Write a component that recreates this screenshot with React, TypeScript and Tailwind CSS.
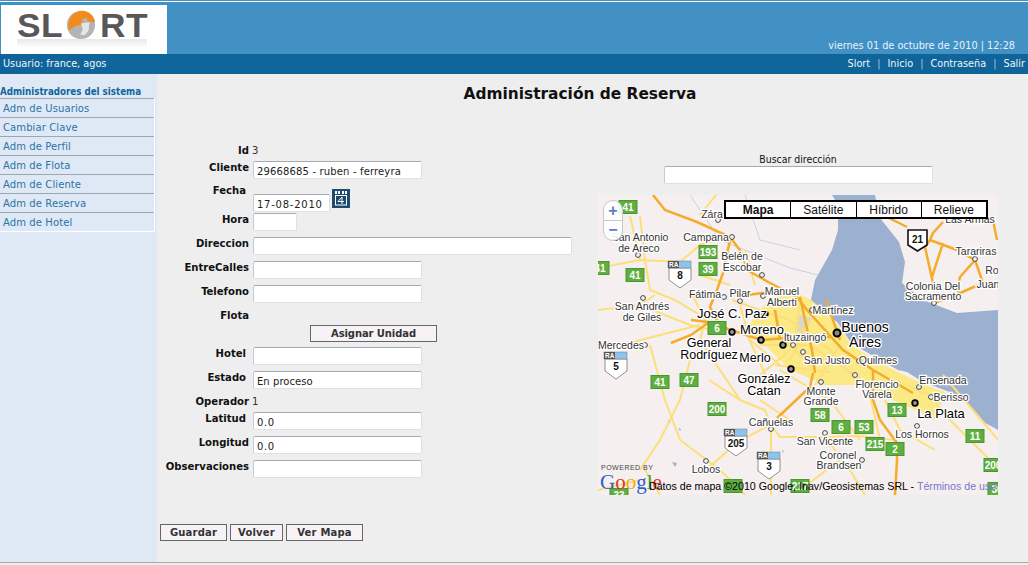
import React from "react";

const tahoma = "font-['DejaVu_Sans_Condensed','DejaVu_Sans',sans-serif]";
const inputCls = "h-[18px] bg-white border border-[#dfdfe6] border-t-[#a9a9b4] border-l-[#c9c9d2] rounded-[2px] px-[3px] font-['DejaVu_Sans',sans-serif] text-[10px] text-[#222] flex items-center pt-[3px] whitespace-nowrap";
const btnCls = "h-[17px] border border-[#666] bg-[#f6f2f6] font-['DejaVu_Sans',sans-serif] font-bold text-[10px] text-[#333] flex items-center justify-center";

function Row({ label, children, h = 24, pr = 0, top = 0 }: { label: string; children?: React.ReactNode; h?: number; pr?: number; top?: number }) {
  return (
    <div className="flex" style={{ height: h }}>
      <div className="w-[92px] shrink-0 font-['DejaVu_Sans_Condensed','DejaVu_Sans',sans-serif] font-bold text-[11.2px] leading-[14px] text-[#111] whitespace-nowrap flex justify-end" style={{ paddingRight: pr, marginTop: top }}>
        {label}
      </div>
      <div className="ml-[4px]">{children}</div>
    </div>
  );
}

function Field({ w = 169, v = "", t = 0.55 }: { w?: number; v?: string; t?: number }) {
  return <div className={inputCls} style={{ width: w, letterSpacing: t }}>{v}</div>;
}

const minor = [
  "M598 268 L640 260 L680 262 L700 245 L727 236", "M640 216 L645 260 L650 290 L675 300 L700 315", "M598 310 L640 305 L690 325 L720 332",
  "M598 350 L621 345 L660 335 L700 325", "M650 345 L665 400 L680 440 L720 470 L745 495", "M690 360 L680 400 L660 440 L640 470", "M706 470 L740 440 L771 425 L771 495",
  "M771 425 L780 437 L825 437 L860 436 L895 440", "M825 437 L850 470 L865 495", "M840 460 L800 490", "M709 380 L740 400 L765 410 L771 425", "M760 400 L790 420",
  "M920 385 L950 420 L985 455 L998 470", "M885 400 L900 430 L935 450", "M870 395 L880 440", "M943 375 L990 430 L998 440", "M700 215 L720 190", "M640 260 L630 216",
  "M690 290 L705 320 L700 340 L740 400", "M640 305 L655 295", "M645 470 L660 495", "M598 490 L640 480", "M780 370 L830 400 L860 440", "M745 330 L770 385",
  "M732 300 L760 310 L790 320", "M740 305 L750 340 L780 365", "M770 300 L785 340 L815 370", "M790 320 L830 350 L860 385", "M760 345 L810 345 L870 385", "M810 320 L790 360", "M840 345 L815 385",
  "M775 365 L830 372", "M800 300 L795 340", "M745 250 L755 285", "M700 275 L730 285", "M908 385 L925 395", "M760 375 L790 350",
];
const major = [
  "M653 195 L665 210 L697 222 L730 237 L742 253 L747 270 L770 283 L797 297 L807 310 L843 350 L873 370 L913 393",
  "M730 240 L723 273 L717 290 L710 307 L717 320",
  "M691 320 L708 322 L731 330 L761 340 L798 337 L831 337",
  "M671 343 L691 335 L708 323",
  "M747 295 L763 293 L790 290",
  "M813 373 L810 387 L793 403 L777 418",
  "M873 400 L880 420 L897 443 L897 460 L895 495",
  "M873 370 L873 400",
  "M930 240 L925 247 L933 283 M943 243 L932 277 M930 240 L957 250 L975 260 L960 277 L957 290 L960 293 L937 302 M975 260 L983 283 L960 293",
  "M997 240 L993 220 M887 217 L907 227 M943 222 L933 233 L930 240",
  "M800 297 L805 320 L812 350 L815 373", "M840 340 L826 300", "M780 340 L775 310",
];
const shields: [number, number, string][] = [
  [628, 207, "41"], [600, 268, "41"], [708, 252, "193"], [708, 269, "39"], [635, 275, "41"], [717, 328, "6"], [660, 382, "41"], [689, 380, "47"], [717, 409, "200"],
  [820, 415, "58"], [841, 427, "6"], [864, 427, "53"], [897, 410, "13"], [875, 444, "215"], [895, 449, "2"], [975, 436, "11"], [993, 465, "200"], [733, 486, ""], [800, 486, "217"], [619, 495, "33"], [997, 489, "36"],
];
type L = [number, number, string, number?];
const labels: L[] = [
  [712, 218, "Zára"], [706, 241, "Campana"], [640, 241, "San Antonio"], [639, 252, "de Areco"], [742, 260, "Belén de"], [742, 271, "Escobar"], [705, 298, "Fátima"], [740, 297, "Pilar"],
  [782, 295, "Manuel"], [782, 306, "Alberti"], [833, 314, "Martínez"], [732, 318, "José C. Paz", 13], [642, 310, "San Andrés"], [642, 321, "de Giles"], [933, 290, "Colonia Del"], [933, 300, "Sacramento"],
  [976, 255, "Tarariras"], [970, 223, "Las Armas"], [992, 274, "Ro"], [988, 288, "Juan"], [865, 332, "Buenos", 14], [865, 347, "Aires", 14], [762, 334, "Moreno", 13], [709, 347, "General", 12.5], [709, 359, "Rodríguez", 12.5],
  [755, 362, "Merlo", 12.5], [805, 341, "Ituzaingó"], [827, 364, "San Justo"], [878, 364, "Quilmes"], [764, 383, "González", 12.5], [764, 395, "Catan", 12.5], [877, 388, "Florencio"], [877, 398, "Varela"],
  [821, 395, "Monte"], [821, 405, "Grande"], [621, 349, "Mercedes"], [943, 384, "Ensenada"], [951, 401, "Berisso"], [941, 418, "La Plata", 13], [771, 426, "Cañuelas"], [922, 438, "Los Hornos"], [825, 445, "San Vicente"],
  [838, 459, "Coronel"], [839, 469, "Brandsen"], [706, 473, "Lobos"],
];
const dots: [number, number, boolean?][] = [
  [718, 220], [732, 237], [638, 255], [762, 275], [643, 298], [724, 297], [740, 301], [763, 296], [812, 310], [765, 314, true], [732, 332, true], [761, 340, true], [783, 345, true], [793, 345],
  [803, 352], [791, 369, true], [821, 382], [855, 375], [859, 361], [915, 403, true], [919, 387], [931, 397], [771, 429], [825, 433], [917, 426], [862, 460], [706, 461], [934, 303], [975, 259], [645, 345],
];
const ra: [number, number, string][] = [[680, 274, "8"], [616, 365, "5"], [736, 442, "205"], [769, 465, "3"]];

function MapDrawing() {
  return (
    <svg viewBox="598 195 400 300" className="absolute inset-0 w-[400px] h-[300px]" fontFamily="'Liberation Sans',sans-serif">
      <rect x="598" y="195" width="400" height="300" fill="#f6eff0" />
      <path d="M832 195 L875 195 L880 218 L899 242 L905 262 L902 283 L923 300 L957 313 L998 310 L998 430 L980 420 L963 397 L923 382 L907 372 L898 370 L875 357 L851 343 L838 323 L811 300 L815 280 L832 250 L838 230 L838 205 Z" fill="#9bb1cf" />
      <path d="M770 300 L790 290 L811 300 L838 325 L851 345 L875 360 L898 372 L925 385 L945 392 L935 420 L905 405 L880 395 L860 385 L825 385 L790 370 L765 345 L745 330 L760 310 Z" fill="#fbe985" />
      <path d="M800 315 L812 318 L805 335 L795 330 Z" fill="#d9d8c8" />
      <path d="M690 195 L720 240 L745 250 L790 268 L818 275 M745 195 L760 240 L800 250" fill="none" stroke="#c4d3e4" strokeWidth="1" />
      <path d="M678 428 l3 1 l-1 2 Z M672 462 l5 1 l-2 4 Z M668 420 l3 2 l-3 1 Z M782 450 l2 1 l-1 2 Z" fill="#9bb1cf" />
      {minor.map((d, i) => <path key={i} d={d} fill="none" stroke="#fbdf7a" strokeWidth="2" />)}
      {major.map((d, i) => <path key={i} d={d} fill="none" stroke="#f4ac2a" strokeWidth="2.5" />)}
      {shields.map(([x, y, t], i) => (
        <g key={i}>
          <rect x={x - 9} y={y - 6.5} width={18} height={13} fill="#5eae40" stroke="#4c9433" strokeWidth="1" />
          <text x={x} y={y + 3.5} textAnchor="middle" fontSize="10" fontWeight="700" fill="#fff">{t}</text>
        </g>
      ))}
      {ra.map(([x, y, t], i) => (
        <g key={i}>
          <path d={`M${x - 11} ${y - 6} H${x + 11} V${y + 6} L${x} ${y + 14} L${x - 11} ${y + 6} Z`} fill="#fff" stroke="#777" strokeWidth="0.8" />
          <rect x={x - 12} y={y - 13} width={23} height={7} fill="#8cc4ee" stroke="#777" strokeWidth="0.5" />
          <rect x={x - 12} y={y - 13} width={11} height={7} fill="#555" />
          <text x={x - 11} y={y - 7} fontSize="6.5" fontWeight="700" fill="#fff">RA</text>
          <text x={x} y={y + 5} textAnchor="middle" fontSize="10" fontWeight="700" fill="#111">{t}</text>
        </g>
      ))}
      <path d="M908 230 H927 V245 L917.500 251 L908 245 Z" fill="#fff" stroke="#111" strokeWidth="1.6" />
      <text x="917.500" y="243" textAnchor="middle" fontSize="10" fontWeight="700" fill="#111">21</text>
      {dots.map(([x, y, big], i) => (
        <circle key={i} cx={x} cy={y} r={big ? 2.8 : 2.4} fill={big ? "#999" : "#f4f4f4"} stroke={big ? "#000" : "#444"} strokeWidth={big ? 1.8 : 1} />
      ))}
      {labels.map(([x, y, t, s], i) => (
        <text key={i} x={x} y={y} textAnchor="middle" fontSize={s ?? 10.5} fill={s ? "#000" : "#333"} stroke="#fff" strokeWidth="2.5" className="[paint-order:stroke]">{t}</text>
      ))}
      <circle cx="837" cy="333" r="3.5" fill="#888" stroke="#000" strokeWidth="2" />
      <text x="601" y="470" fontSize="7" fill="#444" letterSpacing="0.5">POWERED BY</text>
      <text x="600" y="489" fontSize="21" fontFamily="'Liberation Serif',serif">
        <tspan fill="#2a5fd0">G</tspan><tspan fill="#d83a2a">o</tspan><tspan fill="#e8b020">o</tspan><tspan fill="#2a5fd0">g</tspan><tspan fill="#3a9a3a">l</tspan><tspan fill="#d83a2a">e</tspan>
      </text>
    </svg>
  );
}

function Logo() {
  return (
    <div className="w-[166px] h-[49px] bg-white mt-[1px] ml-[1px] flex items-center pl-[16px] pb-[9px] overflow-hidden relative">
      <div className="absolute left-[16px] top-[34px] w-[130px] h-[9px] bg-gradient-to-b from-[#e8e8e8] to-white" />
      <span className="relative font-['Liberation_Sans',sans-serif] font-bold text-[33px] leading-none text-[#58585a] tracking-[0.5px] [transform:scaleX(1.07)] origin-left w-[49px]">SL</span>
      <svg viewBox="0 0 32 32" className="relative w-[30px] h-[30px] shrink-0">
        <circle cx="16" cy="16" r="15" fill="#b4b4b4" />
        <path d="M3 22 C1 12 5 3 15 1 C24 0 30 6 31 13 L23 12 L22 8 L17 10 L18 15 L10 17 Z" fill="#f28a1e" />
        <path d="M16 14 L25 13 L24 22 L20 27 L15 26 L18 21 Z" fill="#e6e6e6" />
      </svg>
      <span className="relative font-['Liberation_Sans',sans-serif] font-bold text-[33px] leading-none text-[#58585a] tracking-[0.5px] [transform:scaleX(1.07)] origin-left ml-[4px]">RT</span>
    </div>
  );
}

function Calendar() {
  return (
    <svg viewBox="0 0 18 19" className="w-[18px] h-[19px] ml-[2px] mt-[-5px]">
      <rect width="18" height="19" fill="#1f4a70" />
      <rect x="3" y="2" width="2" height="3" fill="#fff" />
      <rect x="6" y="2" width="2" height="3" fill="#fff" />
      <rect x="10" y="2" width="2" height="3" fill="#fff" />
      <rect x="13" y="2" width="2" height="3" fill="#fff" />
      <rect x="3.500" y="6.500" width="11" height="9.500" fill="none" stroke="#fff" />
      <path d="M10 8 L6 12.500 H12 M10 8 V15" fill="none" stroke="#fff" />
    </svg>
  );
}

const menu = ["Adm de Usuarios", "Cambiar Clave", "Adm de Perfil", "Adm de Flota", "Adm de Cliente", "Adm de Reserva", "Adm de Hotel"];
const types = ["Mapa", "Satélite", "Híbrido", "Relieve"];

export default function App() {
  return (
    <div className={`w-[1028px] h-[565px] overflow-hidden flex flex-col bg-[#eeeeee] ${tahoma}`}>
      <header className="h-[54px] shrink-0 bg-[#4191c5] border-t border-t-[#4191c5] relative flex flex-col">
        <div className="h-[1px] bg-white shrink-0" />
        <div className="flex-1 flex justify-between items-end">
          <Logo />
          <div className="text-[10.8px] leading-[14px] text-[#e8f2f9] pr-[13px] pb-[1px]">viernes 01 de octubre de 2010 | 12:28</div>
        </div>
      </header>
      <nav className="h-[20px] shrink-0 bg-[#0f6499] flex justify-between items-center px-[3px] text-[10.8px] text-[#eef5fa]">
        <span>Usuario: france, agos</span>
        <span className="flex gap-[7px]">
          <span>Slort</span><span className="text-[#a9c6dc]">|</span><span>Inicio</span><span className="text-[#a9c6dc]">|</span><span>Contraseña</span><span className="text-[#a9c6dc]">|</span><span>Salir</span>
        </span>
      </nav>
      <div className="h-[489px] shrink-0 flex border-b-[1px] border-b-[#a8a8a8]">
        <aside className="w-[157px] shrink-0 bg-[#dee9f5] pt-[12px]">
          <div className="font-bold text-[9.7px] leading-[12px] text-[#10659b] whitespace-nowrap h-[12px]">Administradores del sistema</div>
          <ul className="w-[155px] border-r border-b border-white">
            {menu.map((m) => (
              <li key={m} className="h-[19px] border-t border-t-[#9aa7b4] pl-[3px] font-['DejaVu_Sans',sans-serif] text-[10px] tracking-[0.1px] leading-[19px] text-[#2a74a8]">{m}</li>
            ))}
          </ul>
        </aside>
        <main className="flex-1 relative">
          <h1 className="w-[846px] text-center font-['DejaVu_Sans',sans-serif] font-bold text-[15.4px] leading-[20px] text-[#111] pt-[10px] h-[29px]">Administración de Reserva</h1>
          <div className="flex mt-[39px]">
            <div className="w-[441px] shrink-0 flex flex-col">
              <Row label="Id" h={19} top={2}>
                <span className="text-[11.2px] leading-[14px] text-[#333] block -ml-[1px] mt-[2px]">3</span>
              </Row>
              <Row label="Cliente" h={28}><Field v="29668685 - ruben - ferreyra" t={0.15} /></Row>
              <Row label="Fecha" pr={3} top={-5}>
                <div className="flex items-start mt-[5px]"><Field w={77} v="17-08-2010" t={0.75} /><Calendar /></div>
              </Row>
              <Row label="Hora"><Field w={44} /></Row>
              <Row label="Direccion"><Field w={319} /></Row>
              <Row label="EntreCalles"><Field /></Row>
              <Row label="Telefono"><Field /></Row>
              <Row label="Flota" h={16}><span /></Row>
              <div className="h-[22px] pl-[153px]">
                <div className={`${btnCls} w-[127px] tracking-[-0.1px]`}>Asignar Unidad</div>
              </div>
              <Row label="Hotel" pr={3}><Field /></Row>
              <Row label="Estado" h={30} pr={3}><Field v="En proceso" t={0.05} /></Row>
              <Row label="Operador" h={11} top={-6}>
                <span className="text-[11.2px] leading-[14px] text-[#333] block -ml-[1px] -mt-[6px]">1</span>
              </Row>
              <Row label="Latitud" pr={3}><Field v="0.0" /></Row>
              <Row label="Longitud"><Field v="0.0" /></Row>
              <Row label="Observaciones"><Field /></Row>
            </div>
            <div className="flex flex-col mt-[10px]">
              <div className="w-[400px] flex flex-col items-center h-[43px]">
                <div className="text-[10.4px] leading-[14px] text-[#111]">Buscar dirección</div>
                <div className={`${inputCls} w-[269px]`} />
              </div>
              <div className="w-[400px] h-[300px] relative overflow-hidden">
                <MapDrawing />
                <div className="absolute left-[5px] top-[5px] w-[20px] h-[41px] bg-white/90 border border-[#c8c8c8] rounded-[10px] flex flex-col items-center text-[#5b7ec8] font-['Liberation_Sans',sans-serif] font-bold">
                  <span className="h-[20px] leading-[19px] text-[16px] border-b border-[#c8c8c8] w-full text-center">+</span>
                  <span className="h-[20px] leading-[18px] text-[16px]">−</span>
                </div>
                <div className="absolute left-[126px] top-[5px] w-[264px] h-[19px] flex font-['Liberation_Sans',sans-serif] text-[12px] text-[#111] border-2 border-black bg-white">
                  {types.map((t, i) => (
                    <div key={t} className={`flex-1 flex items-center justify-center ${i === 0 ? "font-bold" : "border-l border-black"}`}>{t}</div>
                  ))}
                </div>
                <div className="absolute left-[51px] top-[285px] whitespace-nowrap font-['Liberation_Sans',sans-serif] text-[10.66px] leading-[12px] text-black">
                  Datos de mapa ©2010 Google, Inav/Geosistemas SRL - <span className="text-[#7777cc]">Términos de uso</span>
                </div>
              </div>
            </div>
          </div>
          <div className="absolute left-[3px] top-[450px] flex gap-[3px] tracking-[0.2px]">
            <div className={`${btnCls} w-[67px]`}>Guardar</div>
            <div className={`${btnCls} w-[53px]`}>Volver</div>
            <div className={`${btnCls} w-[77px]`}>Ver Mapa</div>
          </div>
        </main>
      </div>
    </div>
  );
}
